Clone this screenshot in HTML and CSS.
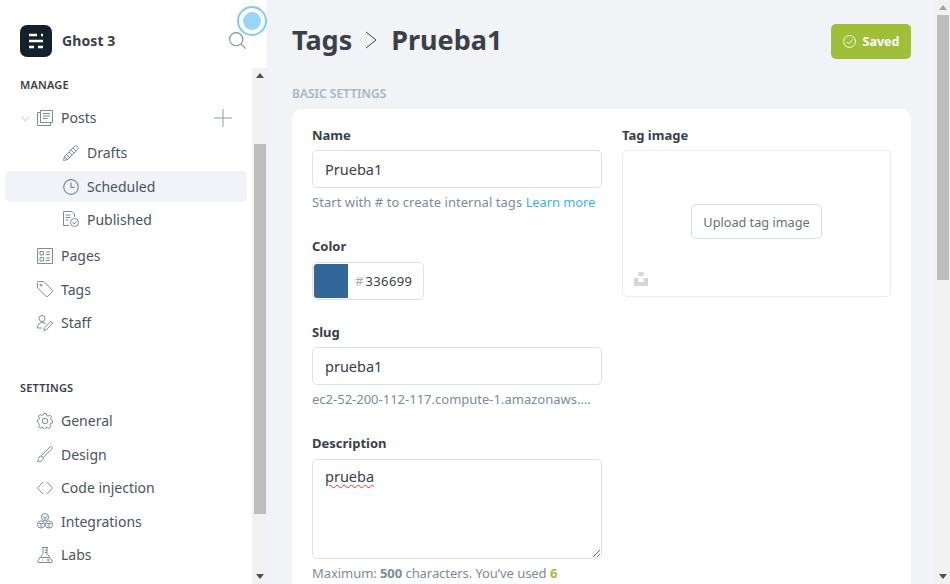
FILE: index.html
```html
<!DOCTYPE html>
<html lang="en">
<head>
<meta charset="utf-8">
<title>Tags - Prueba1</title>
<link rel="stylesheet" href="styles.css">
</head>
<body>
<aside class="sidebar">
  <header class="brand">
    <svg class="logo" viewBox="0 0 32 32"><rect width="32" height="32" rx="7" fill="#15212a"/><path d="M9 10h8M21 10h2M9 16h14M9 22h5M18 22h5" stroke="#fff" stroke-width="2.4" fill="none"/></svg>
    <span class="brand-name">Ghost 3</span>
    <svg class="search" viewBox="0 0 16 16"><circle cx="6.8" cy="6.8" r="6.2"/><path d="M11.3 11.3l4.4 4.4"/></svg>
  </header>
  <div class="pulse"><span class="pulse-dot"></span></div>
  <div class="side-body">
    <nav class="nav">
      <h3 class="nav-head">MANAGE</h3>
      <div class="row row-posts">
        <svg class="caret" viewBox="0 0 10 6"><path d="M.5.5l4.5 4.5L9.5.5"/></svg>
        <svg class="ico" viewBox="0 0 16 16"><path d="M3.5 .5h12v12h-12zM6 3.5h7M6 6h7M6 8.5h4.5M3.5 2.5h-3v13h13v-3"/></svg>
        <span>Posts</span>
        <svg class="plus" viewBox="0 0 18 18"><path d="M9 0v18M0 9h18"/></svg>
      </div>
      <div class="row sub sub-first">
        <svg class="ico" viewBox="0 0 16 16"><path d="M4.5 14.500l-4 1 1-4L11.500 1.200a1.600 1.600 0 0 1 2.300 0l1 1a1.600 1.600 0 0 1 0 2.300zM1.500 11.500l3 3M10 3l3 3M8 5l3 3M6 7l3 3M3.500 9.500l3 3"/></svg>
        <span>Drafts</span>
      </div>
      <div class="row sub active">
        <svg class="ico" viewBox="0 0 16 16"><circle cx="8" cy="8" r="7.300" stroke-width="1.200"/><path d="M8 3.500V8.400h3.600" stroke-width="1.200"/></svg>
        <span>Scheduled</span>
      </div>
      <div class="row sub">
        <svg class="ico" viewBox="0 0 16 16"><path d="M6 14.500H.5V.5h8.500l2.500 2.500v3M2.500 4h5M2.500 6.500h5M2.500 9h3"/><circle cx="11.500" cy="11.500" r="4"/><path d="M9.500 11.500l1.500 1.500 2.500-2.800"/></svg>
        <span>Published</span>
      </div>
      <div class="row row-gap">
        <svg class="ico" viewBox="0 0 16 16"><path d="M.5.5h15v15H.5zM3 3.500h3.500V7H3zM3 9.500h3.500V13H3zM9 4h4M9 6.500h4M9 10h4M9 12.500h4"/></svg>
        <span>Pages</span>
      </div>
      <div class="row">
        <svg class="ico" viewBox="0 0 16 16"><path d="M.5 1.500a1 1 0 0 1 1-1h5.200L15.300 9a1.200 1.200 0 0 1 0 1.700l-4.600 4.600a1.200 1.200 0 0 1-1.700 0L.5 6.800z"/><circle cx="4" cy="4" r="1"/></svg>
        <span>Tags</span>
      </div>
      <div class="row">
        <svg class="ico" viewBox="0 0 16 16"><circle cx="5" cy="3.500" r="3"/><path d="M.5 13c0-3.500 2-5.500 4.800-5.500 1.300 0 2.300.3 3.200 1M.5 13h4.200M6.800 15.500l.6-2.700 5.600-5.600a1.300 1.300 0 0 1 2 0 1.300 1.300 0 0 1 0 1.900l-5.600 5.700z"/></svg>
        <span>Staff</span>
      </div>
      <h3 class="nav-head nav-head-settings">SETTINGS</h3>
      <div class="row">
        <svg class="ico" viewBox="0 0 16 16"><circle cx="8" cy="8" r="2.800"/><path d="M6.800.5h2.400l.4 2 1.500.7 1.800-1 1.600 1.700-1 1.700.7 1.500 1.300.4v2.400l-1.900.4-.7 1.500 1 1.800-1.700 1.600-1.700-1-1.500.7-.4 1.900H6.800l-.4-1.900-1.500-.7-1.700 1-1.700-1.600 1-1.800-.7-1.500L.5 9.200V6.800l1.300-.4.700-1.500-1-1.700L3.200 1.500l1.700 1 1.500-.7z"/></svg>
        <span>General</span>
      </div>
      <div class="row">
        <svg class="ico" viewBox="0 0 16 16"><path d="M.5 15.500c1-1 .5-3 1.500-4.500 1-1.200 3-1 3.800 0 .7 1 .3 2.500-.8 3.500-1.200 1-3 1-4.500 1zM4 9.800L13 1c.7-.7 1.600-.6 2 0 .5.600.4 1.300-.2 2L6 11.800"/></svg>
        <span>Design</span>
      </div>
      <div class="row">
        <svg class="ico" viewBox="0 0 16 16"><path d="M6 2L.5 8 6 14M10 2l5.500 6L10 14"/></svg>
        <span>Code injection</span>
      </div>
      <div class="row">
        <svg class="ico" viewBox="0 0 16 16"><circle cx="8" cy="4.200" r="3.600"/><circle cx="4" cy="11.500" r="3.600"/><circle cx="12" cy="11.500" r="3.600"/><path d="M5.500 3.300L8 5l2.500-1.700M8 5v2.500M1.500 10.500H6.500M4 10.500v4.500M9.500 10.500h5M12 10.500v4.500"/></svg>
        <span>Integrations</span>
      </div>
      <div class="row">
        <svg class="ico" viewBox="0 0 16 16"><path d="M5 .5h6M6 .5v6L.8 14a1 1 0 0 0 .8 1.500h12.800a1 1 0 0 0 .8-1.500L10 6.500v-6M8 3h2M8 5.500h2M3.500 10.500h9M5 13h1M10 13h2.500M11.200 11.800v2.400"/></svg>
        <span>Labs</span>
      </div>
    </nav>
    <div class="scrollbar">
      <span class="arrow-up dark"></span>
      <div class="track track-side"><span class="thumb thumb-side"></span></div>
      <span class="arrow-down dark"></span>
    </div>
  </div>
</aside>
<div class="main-wrap">
  <main class="main">
    <header class="page-head">
      <h1 class="title">Tags
        <svg class="crumb" viewBox="0 0 12 18"><path d="M1 1l10 8-10 8"/></svg>
        Prueba1</h1>
      <button class="saved" type="button">
        <svg class="check" viewBox="0 0 14 14"><circle cx="7" cy="7" r="6.400"/><path d="M3.800 7.300l2.200 2.200 4.300-4.800"/></svg>
        Saved</button>
    </header>
    <h4 class="section">BASIC SETTINGS</h4>
    <section class="card">
      <div class="col">
        <div class="field">
          <label class="label">Name</label>
          <input class="input" type="text" value="Prueba1">
          <p class="help help-name">Start with # to create internal tags <a class="link">Learn more</a></p>
        </div>
        <div class="field field-color">
          <label class="label label-tall">Color</label>
          <div class="color-input"><span class="swatch"></span><span class="hash">#</span><span class="hex">336699</span></div>
        </div>
        <div class="field field-slug">
          <label class="label">Slug</label>
          <input class="input" type="text" value="prueba1">
          <p class="help help-url">ec2-52-200-112-117.compute-1.amazonaws.…</p>
        </div>
        <div class="field field-desc">
          <label class="label label-tall">Description</label>
          <div class="textarea"><span class="typo">prueba</span></div>
          <p class="help help-count">Maximum: <b>500</b> characters. You’ve used <b class="used">6</b></p>
        </div>
      </div>
      <div class="col">
        <label class="label">Tag image</label>
        <div class="image-box">
          <button class="upload" type="button">Upload tag image</button>
          <svg class="unsplash" viewBox="0 0 14 14"><path d="M4.500 0h5v4h-5zM0 6h4.500v4h5V6H14v8H0z"/></svg>
        </div>
      </div>
    </section>
  </main>
  <div class="scrollbar">
    <span class="arrow-up"></span>
    <div class="track track-main"><span class="thumb thumb-main"></span></div>
    <span class="arrow-down dark"></span>
  </div>
</div>
</body>
</html>
```
FILE: styles.css
```css
* { box-sizing: border-box; }
html, body { margin: 0; height: 584px; overflow: hidden; }
body { display: flex; font-family: "Noto Sans", sans-serif; color: #394047; background: #f1f3f7; }

.sidebar { position: relative; width: 268px; height: 584px; flex: none; background: #fff; border-right: 1px solid #f0f1f3; display: flex; flex-direction: column; }
.brand { height: 68px; flex: none; display: flex; align-items: center; padding: 13px 21px 0 20px; }
.logo { width: 32px; height: 32px; flex: none; }
.brand-name { margin-left: 10px; font-size: 14px; font-weight: 700; color: #394047; letter-spacing: .1px; }
.search { margin-left: auto; width: 17px; height: 17px; fill: none; stroke: #7c8b9a; stroke-width: 1; }
.pulse { position: absolute; left: 237px; top: 6px; width: 30px; height: 30px; border: 2px solid #7fcbf6; border-radius: 50%; background: #fff; display: flex; align-items: center; justify-content: center; }
.pulse-dot { width: 18px; height: 18px; border-radius: 50%; background: #98d5f8; }

.side-body { flex: 1; display: flex; min-height: 0; }
.nav { flex: 1; min-width: 0; padding: 0 5px; }
.nav-head { margin: 9px 0 0; padding-left: 15px; height: 16px; line-height: 16px; font-size: 11px; font-weight: 600; letter-spacing: .2px; color: #394047; }
.nav-head-settings { margin-top: 40px; height: 17px; margin-bottom: 7.700px; }
.row { display: flex; align-items: center; height: 33.500px; padding-left: 32px; border-radius: 5px; font-size: 14px; color: #4a545e; }
.row .ico { width: 16px; height: 16px; flex: none; margin-right: 8px; fill: none; stroke: #7c8b9a; stroke-width: 1; }
.row-posts { position: relative; margin-top: 8px; height: 34px; padding-bottom: 1px; }
.caret { position: absolute; left: 16px; top: 15px; width: 9px; height: 6px; fill: none; stroke: #aeb7c0; }
.plus { margin-left: auto; margin-right: 15px; width: 18px; height: 18px; fill: none; stroke: #8e9aa5; }
.sub { padding-left: 58px; }
.sub-first { margin-top: 1px; }
.active { background: #f1f3f8; height: 31px; margin-top: 1.500px; margin-bottom: .500px; }
.row-gap { margin-top: 3px; }

.scrollbar { width: 15px; flex: none; display: flex; flex-direction: column; align-items: center; background: #f1f1f1; }
.arrow-up, .arrow-down { flex: none; width: 0; height: 0; margin: 5px 0; border-left: 4px solid transparent; border-right: 4px solid transparent; }
.arrow-up { border-bottom: 5px solid #a3a3a3; }
.arrow-down { border-top: 5px solid #a3a3a3; }
.arrow-up.dark { border-bottom-color: #505050; }
.arrow-down.dark { border-top-color: #505050; }
.track { flex: 1; width: 100%; display: flex; justify-content: center; }
.thumb { width: 12px; background: #bdbdbd; }
.track-side { padding-top: 61px; }
.thumb-side { height: 370px; }
.track-main { padding-top: 0; }
.thumb-main { height: 265px; }

.main-wrap { flex: 1; min-width: 0; display: flex; }
.main { flex: 1; min-width: 0; padding: 0 24px; overflow: hidden; }
.page-head { height: 86px; display: flex; align-items: flex-start; justify-content: space-between; padding-top: 24px; }
.title { margin: 0; height: 31px; line-height: 31px; font-size: 27px; font-weight: 700; color: #394047; display: flex; align-items: center; }
.crumb { width: 12px; height: 18px; margin: 0 14px 0 13px; fill: none; stroke: #394047; stroke-width: 1; }
.saved { width: 80px; height: 35px; border: 0; border-radius: 5px; background: #a0bf39; color: #fff; font: 700 12.500px "Noto Sans", sans-serif; display: flex; align-items: center; justify-content: center; gap: 7px; padding: 0; }
.check { width: 13px; height: 13px; fill: none; stroke: #fff; stroke-width: 1; }
.section { margin: 0 0 7px; height: 16px; line-height: 16px; font-size: 12px; font-weight: 600; color: #abb4be; }
.card { background: #fff; border-radius: 10px; padding: 18px 20px 40px; display: grid; grid-template-columns: 290px 269px; column-gap: 20px; }
.label { display: block; height: 17px; line-height: 17px; margin-bottom: 6px; font-size: 13px; font-weight: 700; color: #394047; }
.label-tall { margin-bottom: 7px; }
.input { display: block; width: 100%; height: 38px; border: 1px solid #dae3ec; border-radius: 5px; padding: 0 12px; font: 14.500px "Noto Sans", sans-serif; color: #394047; background: #fff; outline: 0; }
.help { margin: 7px 0 0; height: 16px; line-height: 14px; font-size: 13px; color: #7c8b9a; white-space: nowrap; }
.help-name { letter-spacing: .05px; }
.link { color: #3eb0ef; letter-spacing: -.1px; }
.help-count { letter-spacing: -.06px; }
.field-color { margin-top: 27px; }
.color-input { width: 112px; height: 38px; border: 1px solid #dae3ec; border-radius: 5px; display: flex; align-items: center; padding: 1px; font-size: 13px; }
.swatch { width: 34px; height: 34px; background: #336699; border-radius: 3px 0 0 3px; margin-right: 7px; }
.hash { color: #a3aeb8; margin-right: 2px; }
.hex { color: #394047; letter-spacing: .4px; }
.field-slug { margin-top: 24px; }
.field-desc { margin-top: 27px; }
.textarea { width: 100%; height: 100px; border: 1px solid #dae3ec; border-radius: 5px; padding: 5px 12px; font-size: 14.500px; line-height: 22px; color: #394047; resize: vertical; overflow: auto; }
.typo { text-decoration: underline wavy #e33; text-decoration-thickness: 1px; text-underline-offset: 2px; }
.used { color: #a0bf39; }
.image-box { position: relative; height: 147px; border: 1px solid #e5edf3; border-radius: 5px; display: flex; align-items: center; justify-content: center; padding-bottom: 4px; }
.upload { width: 131px; height: 35px; padding: 0; border: 1px solid #d3dee6; border-radius: 5px; background: #fff; color: #66727e; font: 12.700px "Noto Sans", sans-serif; }
.unsplash { position: absolute; left: 11px; bottom: 10px; width: 14px; height: 14px; fill: #d6d6d6; }
```
